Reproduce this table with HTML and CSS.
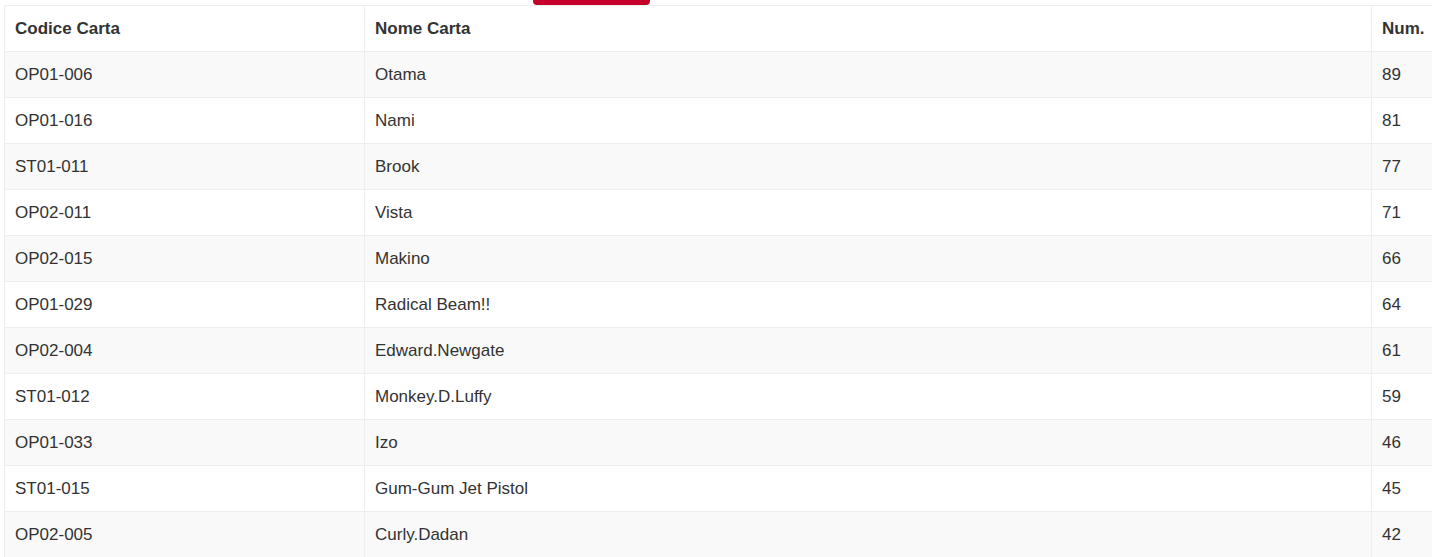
FILE: index.html
```html
<!DOCTYPE html>
<html lang="it">
<head>
<meta charset="utf-8">
<title>Carte</title>
<link rel="stylesheet" href="styles.css">
</head>
<body>
<div class="page">
  <div class="tab-indicator"></div>
  <table class="cards">
    <colgroup>
      <col class="c-code">
      <col class="c-name">
      <col class="c-num">
    </colgroup>
    <thead>
      <tr><th>Codice Carta</th><th>Nome Carta</th><th>Num.</th></tr>
    </thead>
    <tbody>
      <tr><td>OP01-006</td><td>Otama</td><td>89</td></tr>
      <tr><td>OP01-016</td><td>Nami</td><td>81</td></tr>
      <tr><td>ST01-011</td><td>Brook</td><td>77</td></tr>
      <tr><td>OP02-011</td><td>Vista</td><td>71</td></tr>
      <tr><td>OP02-015</td><td>Makino</td><td>66</td></tr>
      <tr><td>OP01-029</td><td>Radical Beam!!</td><td>64</td></tr>
      <tr><td>OP02-004</td><td>Edward.Newgate</td><td>61</td></tr>
      <tr><td>ST01-012</td><td>Monkey.D.Luffy</td><td>59</td></tr>
      <tr><td>OP01-033</td><td>Izo</td><td>46</td></tr>
      <tr><td>ST01-015</td><td>Gum-Gum Jet Pistol</td><td>45</td></tr>
      <tr><td>OP02-005</td><td>Curly.Dadan</td><td>42</td></tr>
    </tbody>
  </table>
</div>
</body>
</html>
```

FILE: styles.css
```css
html, body {
  margin: 0;
  padding: 0;
  background: #fff;
  overflow: hidden;
}
body {
  font-family: "Liberation Sans", Arial, sans-serif;
  font-size: 17px;
  color: #333;
}
.page {
  position: relative;
  padding: 5px 0 0 4px;
}
.tab-indicator {
  position: absolute;
  left: 533px;
  top: 0;
  width: 117px;
  height: 5px;
  background: #c4002b;
  border-radius: 0 0 4px 4px;
}
.cards {
  border-collapse: collapse;
  width: 1500px;
  table-layout: fixed;
}
.c-code { width: 360px; }
.c-name { width: 1007px; }
.cards th,
.cards td {
  border: 1px solid #eee;
  padding: 12px 10px;
  line-height: 21px;
  text-align: left;
  white-space: nowrap;
}
.cards th {
  font-weight: bold;
}
.cards tbody tr:nth-child(odd) {
  background: #f9f9f9;
}
```
